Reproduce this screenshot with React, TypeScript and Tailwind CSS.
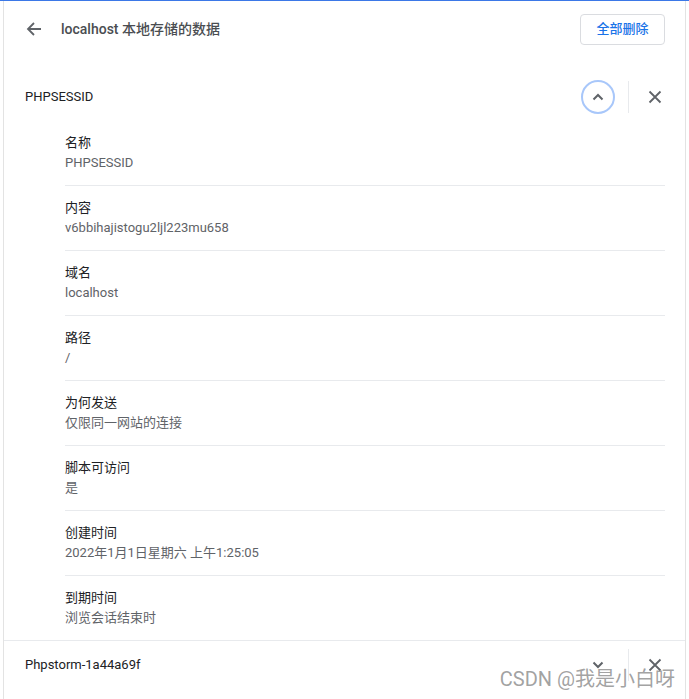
import React from 'react';

const fields = [
  { label: '名称', value: 'PHPSESSID' },
  { label: '内容', value: 'v6bbihajistogu2ljl223mu658' },
  { label: '域名', value: 'localhost' },
  { label: '路径', value: '/' },
  { label: '为何发送', value: '仅限同一网站的连接' },
  { label: '脚本可访问', value: '是' },
  { label: '创建时间', value: '2022年1月1日星期六 上午1:25:05' },
  { label: '到期时间', value: '浏览会话结束时' },
];

function CloseIcon() {
  return (
    <svg width="14" height="14" viewBox="0 0 14 14" fill="none" stroke="#5f6368" strokeWidth="1.8">
      <path d="M1.5 1.5 L12.5 12.5 M12.5 1.5 L1.5 12.5" />
    </svg>
  );
}

function Chevron({ up }: { up: boolean }) {
  return (
    <svg width="12" height="8" viewBox="0 0 12 8" fill="none" stroke="#5f6368" strokeWidth="2">
      <path d={up ? 'M1.5 6.5 L6 2 L10.5 6.5' : 'M1.5 1.5 L6 6 L10.5 1.5'} />
    </svg>
  );
}

function CookieRow({ name, open }: { name: string; open: boolean }) {
  return (
    <div className="flex h-[48px] items-center pl-[21px] pr-[18px]">
      <span className="flex-1 text-[13px] text-[#202124]">{name}</span>
      <button
        className={
          'flex h-[34px] w-[34px] items-center justify-center rounded-full ' +
          (open ? 'border-2 border-[#a8c7fa]' : '')
        }
      >
        <Chevron up={open} />
      </button>
      <div className="ml-[13px] mr-[14px] h-[32px] w-px bg-[#e8eaed]" />
      <button className="flex h-[24px] w-[24px] items-center justify-center">
        <CloseIcon />
      </button>
    </div>
  );
}

export default function App() {
  return (
    <div className="relative h-[699px] w-[689px] overflow-hidden border-t border-[#3b78e7] bg-white font-['Roboto','Noto_Sans_CJK_SC',sans-serif]">
      <div className="ml-[3px] h-full w-[683px] border-x border-[#e3e3e3]">
        {/* header */}
        <div className="flex h-[56px] items-center pl-[22px] pr-[20px]">
          <svg width="16" height="16" viewBox="0 0 16 16" fill="none" stroke="#5f6368" strokeWidth="1.8">
            <path d="M15 8 H2 M8 2 L2 8 L8 14" />
          </svg>
          <h1 className="ml-[19px] flex-1 text-[14px] font-medium text-[#4a4d51]">localhost 本地存储的数据</h1>
          <button className="h-[31px] w-[85px] rounded-[4px] border border-[#dadce0] text-[13px] font-medium text-[#1a73e8]">
            全部删除
          </button>
        </div>

        <div className="mt-4">
          <CookieRow name="PHPSESSID" open={true} />
        </div>

        <div className="ml-[61px] mr-[20px]">
          {fields.map((f, i) => (
            <div
              key={f.label}
              className={
                'pt-[12px] pb-[12px] ' + (i < fields.length - 1 ? 'border-b border-[#e8eaed]' : '')
              }
            >
              <div className="text-[13px] leading-[20px] text-[#202124]">{f.label}</div>
              <div className="text-[13px] leading-[20px] text-[#5f6368]">{f.value}</div>
            </div>
          ))}
        </div>

        <div className="border-t border-[#e8eaed]">
          <CookieRow name="Phpstorm-1a44a69f" open={false} />
        </div>
      </div>

      {/* watermark */}
      <div className="absolute bottom-[5px] right-[14px] text-[20px] text-[#8a8a8a]/80">CSDN @我是小白呀</div>
    </div>
  );
}
